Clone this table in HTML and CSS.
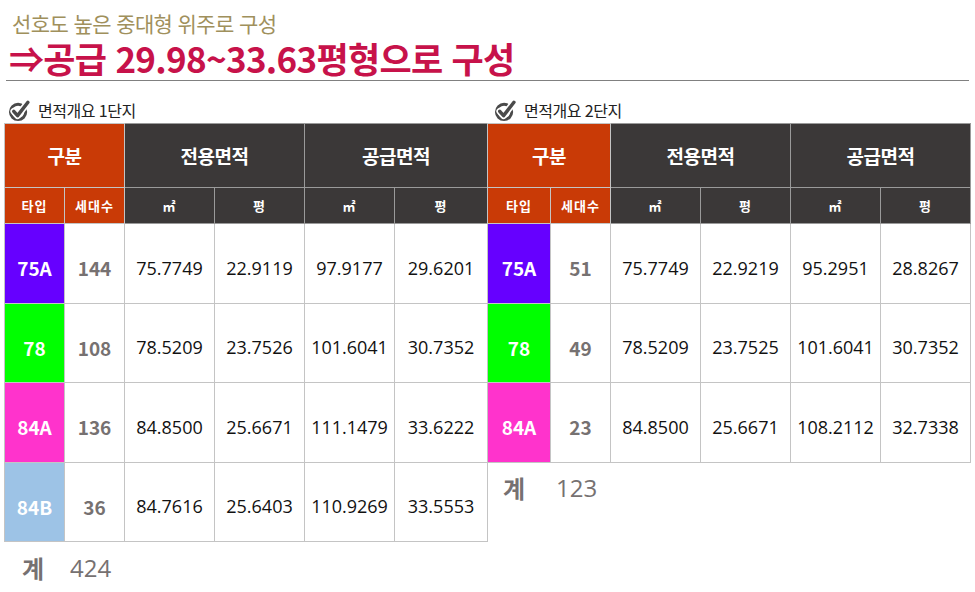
FILE: index.html
```html
<!DOCTYPE html>
<html lang="ko">
<head>
<meta charset="utf-8">
<title>면적개요</title>
<link rel="stylesheet" href="styles.css">
</head>
<body>
<div class="page">
  <header class="head">
    <div class="sub">선호도 높은 중대형 위주로 구성</div>
    <div class="main">⇒공급 29.98~33.63평형으로 구성</div>
  </header>
  <div class="sections">
    <section class="block b1">
      <div class="cap">
        <svg class="chk" viewBox="0 0 24 24" width="23" height="23" aria-hidden="true">
          <circle cx="10.5" cy="13.5" r="8" fill="none" stroke="#4a4a4a" stroke-width="3"/>
          <path d="M6 12.8 L10 17.4 L20.8 3.4" fill="none" stroke="#fff" stroke-width="7" stroke-linecap="round" stroke-linejoin="round"/>
          <path d="M6 12.8 L10 17.4 L20.8 3.4" fill="none" stroke="#4a4a4a" stroke-width="3.6" stroke-linecap="round" stroke-linejoin="round"/>
        </svg>
        <span>면적개요 1단지</span>
      </div>
      <table class="tbl t1">
        <colgroup><col class="c1"><col class="c2"><col class="c3"><col class="c4"><col class="c5"><col class="c6"></colgroup>
        <tr class="h1"><th colspan="2" class="or">구분</th><th colspan="2" class="dk">전용면적</th><th colspan="2" class="dk">공급면적</th></tr>
        <tr class="h2"><th class="or">타입</th><th class="or">세대수</th><th class="dk">㎡</th><th class="dk">평</th><th class="dk">㎡</th><th class="dk">평</th></tr>
        <tr class="r"><td class="ty purple">75A</td><td class="cnt">144</td><td>75.7749</td><td>22.9119</td><td>97.9177</td><td>29.6201</td></tr>
        <tr class="r"><td class="ty green">78</td><td class="cnt">108</td><td>78.5209</td><td>23.7526</td><td>101.6041</td><td>30.7352</td></tr>
        <tr class="r"><td class="ty pink">84A</td><td class="cnt">136</td><td>84.8500</td><td>25.6671</td><td>111.1479</td><td>33.6222</td></tr>
        <tr class="r"><td class="ty blue">84B</td><td class="cnt">36</td><td>84.7616</td><td>25.6403</td><td>110.9269</td><td>33.5553</td></tr>
      </table>
      <div class="total t1tot"><span class="k">계</span><span class="v">424</span></div>
    </section>
    <section class="block b2">
      <div class="cap">
        <svg class="chk" viewBox="0 0 24 24" width="23" height="23" aria-hidden="true">
          <circle cx="10.5" cy="13.5" r="8" fill="none" stroke="#4a4a4a" stroke-width="3"/>
          <path d="M6 12.8 L10 17.4 L20.8 3.4" fill="none" stroke="#fff" stroke-width="7" stroke-linecap="round" stroke-linejoin="round"/>
          <path d="M6 12.8 L10 17.4 L20.8 3.4" fill="none" stroke="#4a4a4a" stroke-width="3.6" stroke-linecap="round" stroke-linejoin="round"/>
        </svg>
        <span>면적개요 2단지</span>
      </div>
      <table class="tbl t2">
        <colgroup><col class="d1"><col class="c2"><col class="c3"><col class="c4"><col class="c5"><col class="d6"></colgroup>
        <tr class="h1"><th colspan="2" class="or">구분</th><th colspan="2" class="dk">전용면적</th><th colspan="2" class="dk">공급면적</th></tr>
        <tr class="h2"><th class="or">타입</th><th class="or">세대수</th><th class="dk">㎡</th><th class="dk">평</th><th class="dk">㎡</th><th class="dk">평</th></tr>
        <tr class="r"><td class="ty purple">75A</td><td class="cnt">51</td><td>75.7749</td><td>22.9219</td><td>95.2951</td><td>28.8267</td></tr>
        <tr class="r"><td class="ty green">78</td><td class="cnt">49</td><td>78.5209</td><td>23.7525</td><td>101.6041</td><td>30.7352</td></tr>
        <tr class="r"><td class="ty pink">84A</td><td class="cnt">23</td><td>84.8500</td><td>25.6671</td><td>108.2112</td><td>32.7338</td></tr>
      </table>
      <div class="total t2tot"><span class="k">계</span><span class="v">123</span></div>
    </section>
  </div>
</div>
</body>
</html>
```

FILE: styles.css
```css
html, body {
  margin: 0;
  padding: 0;
  background: #fff;
}
body {
  font-family: "Noto Sans CJK KR", "Noto Sans", sans-serif;
  width: 975px;
  height: 592px;
  overflow: hidden;
}
.head {
  margin: 0 6px 0 6px;
  padding: 8px 0 2px 6px;
  border-bottom: 1px solid #808080;
}
.sub {
  font-size: 21px;
  line-height: 30px;
  letter-spacing: -0.6px;
  color: #a0905c;
  font-weight: 400;
}
.main {
  font-size: 35px;
  line-height: 40px;
  letter-spacing: -0.7px;
  color: #c7124a;
  font-weight: 700;
  margin-left: -3px;
}
.sections {
  display: flex;
  gap: 1px;
  padding-left: 4px;
}
.block {
  width: 482px;
}
.cap {
  display: flex;
  align-items: center;
  gap: 7px;
  height: 22px;
  margin-top: 18px;
  margin-bottom: 2px;
  padding-left: 4px;
  font-size: 16px;
  color: #222;
  letter-spacing: -0.5px;
}
.b2 .cap {
  padding-left: 7px;
}
.chk {
  display: block;
}
.tbl {
  border-collapse: collapse;
  table-layout: fixed;
  width: 483px;
}
.c1 { width: 60px; }
.c2 { width: 60px; }
.c3 { width: 90px; }
.c4 { width: 90px; }
.c5 { width: 90px; }
.c6 { width: 93px; }
.d1 { width: 63px; }
.d6 { width: 90px; }
.tbl th, .tbl td {
  border: 1px solid #c4c4c4;
  padding: 0;
  text-align: center;
  vertical-align: middle;
}
.tbl th {
  color: #fff;
  font-weight: 700;
}
.h1 th {
  height: 63px;
  font-size: 19px;
  letter-spacing: -0.5px;
}
.h2 th {
  height: 35px;
  font-size: 13px;
  letter-spacing: 1px;
}
.or { background: #c93a06; border-color: #bfbfbf; }
.dk { background: #3b3838; border-color: #9a9a9a !important; }
.r td {
  height: 69.5px;
  padding-top: 9px;
  font-family: "Open Sans", "Noto Sans CJK KR", sans-serif;
  font-size: 18px;
  color: #111;
}
.r td.ty {
  font-family: "Noto Sans CJK KR", sans-serif;
  font-weight: 700;
  font-size: 19px;
  color: #fff;
}
.r td.cnt {
  font-family: "Noto Sans CJK KR", sans-serif;
  font-weight: 700;
  font-size: 19px;
  color: #767171;
}
.purple { background: #6600ff; }
.green { background: #00ff00; }
.pink { background: #ff33cc; }
.blue { background: #9dc3e6; }
.total {
  display: flex;
  align-items: center;
  color: #767171;
  font-size: 24px;
}
.total .k {
  font-weight: 700;
}
.total .v {
  font-family: "Open Sans", "Noto Sans CJK KR", sans-serif;
  font-weight: 500;
}
.t1tot {
  padding-left: 18px;
  gap: 26px;
  height: 50px;
}
.t2tot {
  padding-left: 16px;
  gap: 31px;
  height: 50px;
}
```
